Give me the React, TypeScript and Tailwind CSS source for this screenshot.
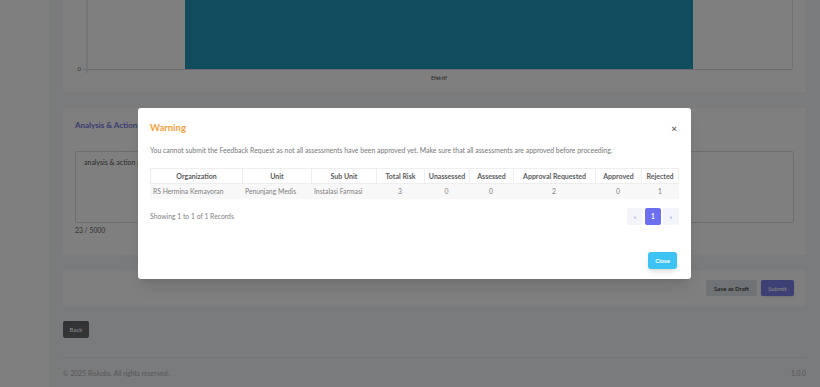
import React from "react";

const font = { fontFamily: "Lato, 'Open Sans', sans-serif" };

function Chart() {
  return (
    <svg width="743" height="92" viewBox="0 0 743 92" className="block">
      <rect x="122" y="0" width="508" height="69" fill="#2298bc" />
      <line x1="24" y1="0" x2="24" y2="73" stroke="#d9d9d9" strokeWidth="1" />
      <line x1="20" y1="69.5" x2="729" y2="69.5" stroke="#d9d9d9" strokeWidth="1" />
      <line x1="729.5" y1="0" x2="729.5" y2="69" stroke="#e6e6e6" strokeWidth="1" />
      <text x="18" y="71" fontSize="6" fill="#666" textAnchor="end" fontFamily="Lato, sans-serif">0</text>
      <text x="376" y="80" fontSize="5.5" fill="#555" textAnchor="middle" fontFamily="Lato, sans-serif">Efektif</text>
    </svg>
  );
}

const cols = [
  { h: "Organization", w: "w-[92px]", v: "RS Hermina Kemayoran", left: true },
  { h: "Unit", w: "w-[69px]", v: "Penunjang Medis", left: true },
  { h: "Sub Unit", w: "w-[65px]", v: "Instalasi Farmasi", left: true },
  { h: "Total Risk", w: "w-[48px]", v: "3" },
  { h: "Unassessed", w: "w-[45px]", v: "0" },
  { h: "Assessed", w: "w-[44px]", v: "0" },
  { h: "Approval Requested", w: "w-[82px]", v: "2" },
  { h: "Approved", w: "w-[46px]", v: "0" },
  { h: "Rejected", w: "w-[39px]", v: "1" },
];

export default function App() {
  return (
    <div className="relative h-[387px] w-[820px] overflow-hidden" style={font}>
      <div className="flex h-full">
        <div className="w-[49px] shrink-0 bg-white" />
        <div className="flex flex-1 flex-col bg-[#f4f6fa] px-[14px]">
          <div className="h-[92px] shrink-0 rounded-b-[3px] bg-white">
            <Chart />
          </div>
          <div className="mt-[16px] flex h-[147px] shrink-0 flex-col rounded-[3px] bg-white px-[12px] pt-[12px]">
            <div className="text-[8px] font-bold leading-[10px] text-[#757de2]">Analysis &amp; Action Plan</div>
            <div className="mt-[21px] h-[72px] rounded-[2px] border border-[#dcdcdc] px-[8px] pt-[6px] text-[7px] leading-[9px] text-[#555]">
              analysis &amp; action plan 1
            </div>
            <div className="mt-[3px] text-[6.8px] leading-[8px] text-[#666]">23 / 5000</div>
          </div>
          <div className="mt-[15px] flex h-[36px] shrink-0 items-center justify-end gap-[4px] rounded-[3px] bg-white px-[12px]">
            <button className="h-[16px] w-[51px] rounded-[2px] bg-[#e1e7ec] text-[6px] font-semibold text-[#333]">Save as Draft</button>
            <button className="h-[16px] w-[33px] rounded-[2px] bg-[#7b80ea] text-[6px] font-semibold text-white shadow">Submit</button>
          </div>
          <div className="mt-[15px] flex">
            <button className="h-[17px] w-[26px] rounded-[2px] bg-[#66686b] text-[6px] font-semibold text-white">Back</button>
          </div>
          <div className="mt-[19px] flex items-center justify-between border-t border-[#e6e7ea] pt-[11px] text-[6.8px] leading-[8px] text-[#b0b0b0]">
            <span>© 2025 Riskobs. All rights reserved.</span>
            <span>1.0.0</span>
          </div>
        </div>
      </div>

      <div className="absolute inset-0 flex items-start justify-center bg-black/50 pl-[9px] pt-[108px]">
        <div className="flex h-[171px] w-[553px] flex-col rounded-[3px] bg-white px-[12px] pt-[14px] shadow-lg">
          <div className="flex items-center justify-between">
            <span className="text-[9.5px] font-bold leading-[12px] text-[#f8a13a]">Warning</span>
            <span className="mr-[2px] text-[10px] font-bold leading-[12px] text-[#666]">×</span>
          </div>
          <div className="mt-[12px] text-[6.9px] leading-[8px] text-[#777]">
            You cannot submit the Feedback Request as not all assessments have been approved yet. Make sure that all assessments are approved before proceeding.
          </div>
          <div className="mt-[14px] flex flex-col">
            <div className="flex h-[16px] border border-[#eeeeee]">
              {cols.map((c, i) => (
                <div
                  key={c.h}
                  className={`${c.w} flex items-center justify-center ${i < cols.length - 1 ? "border-r border-[#eeeeee]" : "flex-1"} text-[7px] font-bold text-[#5a5a5a]`}
                >
                  {c.h}
                </div>
              ))}
            </div>
            <div className="flex h-[15px] bg-[#f8f8f8]">
              {cols.map((c, i) => (
                <div
                  key={c.h}
                  className={`${c.w} flex items-center ${c.left ? "justify-start pl-[3px]" : "justify-center"} ${i === cols.length - 1 ? "flex-1" : ""} text-[6.8px] text-[#808080]`}
                >
                  {c.v}
                </div>
              ))}
            </div>
          </div>
          <div className="mt-[9px] flex items-center justify-between">
            <span className="text-[6.8px] text-[#808080]">Showing 1 to 1 of 1 Records</span>
            <div className="flex gap-[2px]">
              <div className="flex h-[17px] w-[16px] items-center justify-center rounded-[2px] bg-[#f4f4fb] text-[6px] text-[#8a8de8]">«</div>
              <div className="flex h-[17px] w-[16px] items-center justify-center rounded-[2px] bg-[#6b6ff0] text-[6.5px] font-bold text-white">1</div>
              <div className="flex h-[17px] w-[16px] items-center justify-center rounded-[2px] bg-[#f4f4fb] text-[6px] text-[#8a8de8]">»</div>
            </div>
          </div>
          <div className="mt-[27px] flex justify-end pr-[2px]">
            <button className="h-[17px] w-[29px] rounded-[3px] bg-[#3cc3f3] text-[6px] font-bold text-white shadow-md">Close</button>
          </div>
        </div>
      </div>
    </div>
  );
}
